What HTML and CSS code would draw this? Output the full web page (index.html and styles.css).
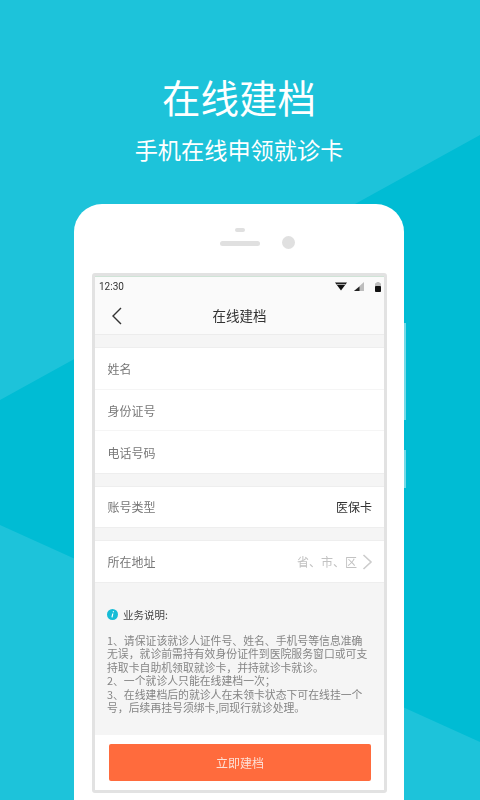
FILE: index.html
```html
<!DOCTYPE html>
<html lang="zh-CN">
<head>
<meta charset="utf-8">
<title>在线建档</title>
<link rel="stylesheet" href="styles.css">
</head>
<body>
<div class="bg-shape"></div>
<header class="hero">
  <h1 class="hero-title">在线建档</h1>
  <p class="hero-sub">手机在线申领就诊卡</p>
</header>
<section class="phone">
  <div class="side-btn side-btn-a"></div>
  <div class="side-btn side-btn-b"></div>
  <div class="phone-top">
    <div class="speaker">
      <span class="sensor"></span>
      <span class="earpiece"></span>
    </div>
    <span class="camera"></span>
  </div>
  <div class="screen">
    <div class="statusbar">
      <span class="clock">12:30</span>
      <span class="status-icons">
        <svg width="12" height="9" viewBox="0 0 12 9"><path d="M0 0.5H12L6 8.5Z" fill="#111"/><path d="M1.6 2.4H10.4" stroke="#fff" stroke-width=".7"/></svg>
        <svg width="10" height="9" viewBox="0 0 10 9"><path d="M10 0V9H0Z" fill="#bdbdbd"/><path d="M5.5 4.5V9H0Z" fill="#222"/></svg>
        <svg width="6" height="10" viewBox="0 0 6 10"><rect x="0" y="1" width="6" height="9" rx="1" fill="#bdbdbd"/><rect x="1.5" y="0" width="3" height="2" fill="#bdbdbd"/><rect x="0" y="4" width="6" height="6" rx="1" fill="#111"/></svg>
      </span>
    </div>
    <div class="navbar">
      <svg class="back" width="12" height="18" viewBox="0 0 12 18"><path d="M10 1L2 9L10 17" fill="none" stroke="#333" stroke-width="1.4"/></svg>
      <span class="nav-title">在线建档</span>
    </div>
    <div class="group">
      <div class="row row-line"><span class="label">姓名</span></div>
      <div class="row row-line"><span class="label">身份证号</span></div>
      <div class="row"><span class="label">电话号码</span></div>
    </div>
    <div class="group">
      <div class="row row-single row-between"><span class="label">账号类型</span><span class="value">医保卡</span></div>
    </div>
    <div class="group">
      <div class="row row-single row-between">
        <span class="label">所在地址</span>
        <span class="picker"><span class="placeholder">省、市、区</span>
          <svg class="chevron" width="11" height="16" viewBox="0 0 11 16"><path d="M1.5 1L9 8L1.5 15" fill="none" stroke="#ccc" stroke-width="1.6"/></svg>
        </span>
      </div>
    </div>
    <div class="notes">
      <div class="notes-head">
        <svg width="11" height="11" viewBox="0 0 11 11"><circle cx="5.5" cy="5.5" r="5.5" fill="#16bcd6"/><path d="M6.4 2.2V3.2M5.8 4.5L5 8.4" stroke="#fff" stroke-width="1.2" fill="none"/></svg>
        <span>业务说明:</span>
      </div>
      <p class="notes-body">1、请保证该就诊人证件号、姓名、手机号等信息准确<br>无误，就诊前需持有效身份证件到医院服务窗口或可支<br>持取卡自助机领取就诊卡，并持就诊卡就诊。<br>2、一个就诊人只能在线建档一次；<br>3、在线建档后的就诊人在未领卡状态下可在线挂一个<br>号，后续再挂号须绑卡,同现行就诊处理。</p>
    </div>
    <div class="footer">
      <button class="submit" type="button">立即建档</button>
    </div>
  </div>
</section>
</body>
</html>
```
FILE: styles.css
```css
* { box-sizing: border-box; }
html, body { margin: 0; padding: 0; }
body {
  position: relative;
  width: 480px;
  height: 800px;
  overflow: hidden;
  background: #1dc3da;
  font-family: "Noto Sans CJK SC", "Noto Sans", sans-serif;
  display: flex;
  flex-direction: column;
  align-items: center;
}
.bg-shape {
  position: absolute;
  inset: 0;
  background: #00bcd4;
  clip-path: polygon(480px 135px, 0 400px, 0 525px, 480px 742px);
}
.hero {
  position: relative;
  flex: none;
  width: 480px;
  height: 204px;
  padding: 70px 2px 0 0;
  text-align: center;
  color: #fff;
}
.hero-title {
  margin: 0;
  font-size: 38.5px;
  font-weight: 400;
  line-height: 52px;
}
.hero-sub {
  margin: 12px 0 0;
  font-size: 23.2px;
  line-height: 30px;
}
.phone {
  position: relative;
  flex: none;
  width: 330px;
  height: 596px;
  margin-left: -2px;
  background: #fff;
  border-radius: 28px 28px 0 0;
  padding: 0 17px 0 18px;
}
.side-btn {
  position: absolute;
  left: 330px;
  width: 2px;
  background: rgba(255, 255, 255, .45);
}
.side-btn-a { top: 119px; height: 97px; }
.side-btn-b { top: 246px; height: 38px; }
.phone-top {
  height: 69px;
  padding-top: 24px;
  display: flex;
  justify-content: center;
  position: relative;
}
.speaker {
  display: flex;
  flex-direction: column;
  align-items: center;
  gap: 9px;
}
.sensor {
  width: 10px;
  height: 4px;
  border-radius: 2px;
  background: #e0e0e0;
}
.earpiece {
  width: 40px;
  height: 5px;
  border-radius: 3px;
  background: #e0e0e0;
}
.camera {
  position: absolute;
  left: 190px;
  top: 32px;
  width: 13px;
  height: 13px;
  border-radius: 50%;
  background: #e0e0e0;
}
.screen {
  width: 295px;
  height: 520px;
  border: 3px solid #e2e2e2;
  border-radius: 3px;
  background: #f5f5f5;
  display: flex;
  flex-direction: column;
  filter: blur(.25px);
}
.statusbar {
  height: 20px;
  padding: 0 3px 0 4px;
  background: #fafafa;
  display: flex;
  align-items: center;
  justify-content: space-between;
  border-top: 1px solid #cfe3d6;
}
.clock {
  font-family: Roboto, sans-serif;
  font-size: 10px;
  color: #333;
}
.status-icons {
  display: flex;
  align-items: center;
  gap: 7px;
}
.status-icons svg { display: block; }
.status-icons svg:last-child { margin-left: 4px; }
.navbar {
  position: relative;
  height: 39px;
  padding-bottom: 1px;
  background: #fafafa;
  border-bottom: 1px solid #ececec;
  display: flex;
  align-items: center;
  justify-content: center;
}
.back {
  position: absolute;
  left: 16px;
  top: 11px;
}
.nav-title {
  font-size: 13.5px;
  color: #333;
}
.group {
  margin-top: 12px;
  background: #fff;
  border-top: 1px solid #eee;
  border-bottom: 1px solid #eee;
}
.row {
  height: 41.5px;
  padding: 0 12px 0 12.5px;
  display: flex;
  align-items: center;
  font-size: 12px;
}
.row-line { border-bottom: 1px solid #f5f5f5; }
.row-line + .row-line,
.row-line + .row { padding-top: 1px; }
.row-single { height: 40.5px; }
.row-between { justify-content: space-between; }
.label { color: #777; }
.value { color: #333; }
.picker {
  display: flex;
  align-items: center;
  gap: 5px;
  margin-right: -1px;
}
.chevron { margin-top: 1px; }
.placeholder { color: #c2c2c2; }
.notes {
  flex: 1;
  padding: 25px 12px 0;
}
.notes-head {
  display: flex;
  align-items: center;
  gap: 5px;
  font-size: 10.5px;
  line-height: 14px;
  color: #444;
}
.notes-head svg { display: block; }
.notes-body {
  margin: 12px 0 0;
  font-size: 10.85px;
  line-height: 13.6px;
  color: #858585;
  white-space: nowrap;
}
.footer {
  flex: none;
  height: 55px;
  background: #fff;
  padding: 9px 14px 0;
}
.submit {
  display: block;
  width: 262px;
  height: 37px;
  border: 0;
  border-radius: 2px;
  background: #ff6b3d;
  color: #fde0d6;
  font: inherit;
  font-size: 12px;
}
```
